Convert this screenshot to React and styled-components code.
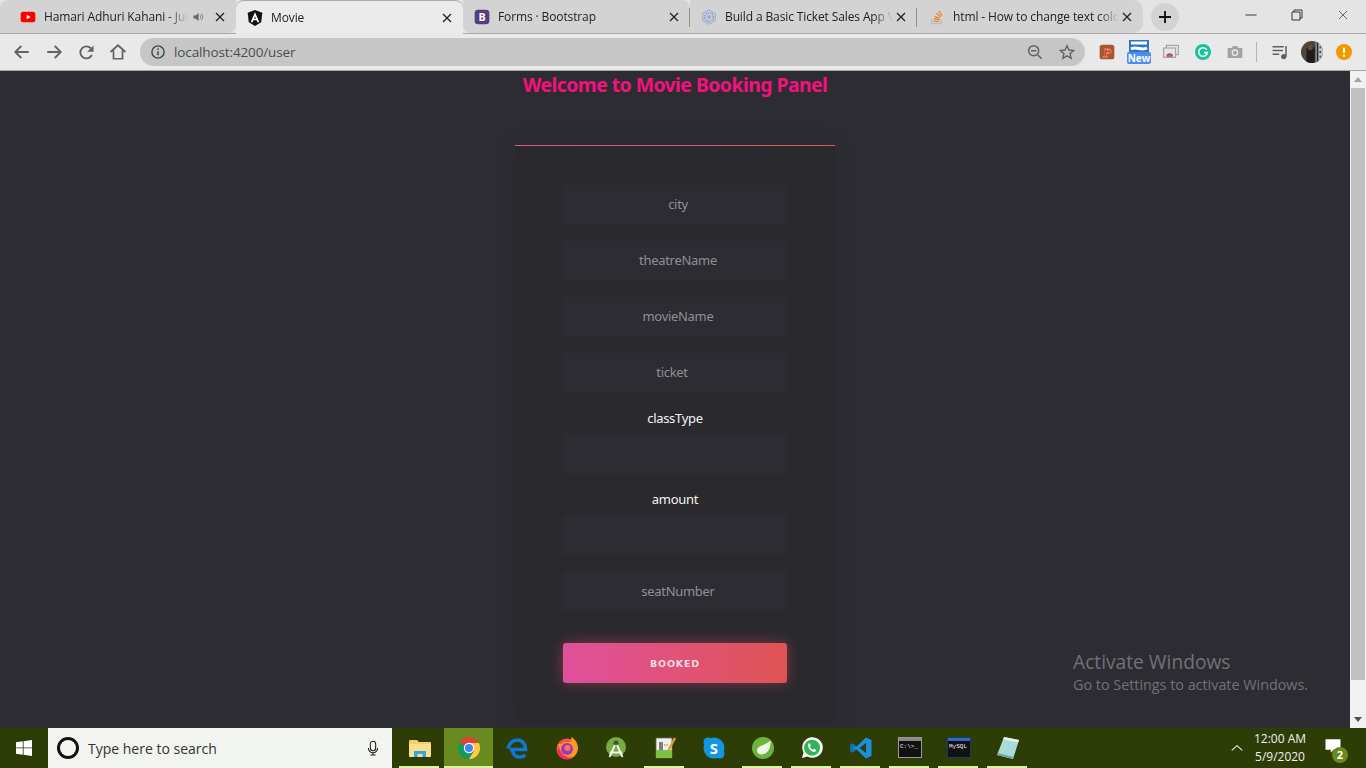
import React from "react";
import styled, { createGlobalStyle } from "styled-components";

const Global = createGlobalStyle`
  html, body { margin: 0; padding: 0; height: 100%; overflow: hidden; }
  #root { height: 100%; }
  * { box-sizing: border-box; }
`;
const Win = styled.div`display:flex;flex-direction:column;width:1366px;height:768px;overflow:hidden;position:relative;font-family:"Open Sans","Noto Sans",sans-serif;`;
const Strip = styled.div`display:flex;align-items:flex-start;height:34px;background:#e4e4e4;border-bottom:1px solid #a9a9a9;`;
const Tab = styled.div`
  display:flex;align-items:center;flex:none;height:${p=>p.$active?34:33}px;width:${p=>p.$w}px;
  padding-left:${p=>p.$pad}px;padding-right:9px;color:#222;font-size:12px;position:relative;
  background:${p=>p.$active?"#ebebeb":"#d3d3d3"};
  border-top:${p=>p.$active?"1px solid #a9a9a9":"none"};
  border-radius:${p=>p.$radius};
  ${p=>p.$sep?"&::after{content:'';position:absolute;right:0;top:8px;width:1px;height:19px;background:#8f8f8f;}":""}
`;
const TabIcon = styled.span`display:flex;width:16px;height:16px;flex:none;margin-right:8px;`;
const TabTitle = styled.span`flex:1;white-space:nowrap;overflow:hidden;min-width:0;letter-spacing:-.12px;
  -webkit-mask-image:linear-gradient(to right,#000 calc(100% - 24px),transparent calc(100% - 4px));mask-image:linear-gradient(to right,#000 calc(100% - 24px),transparent calc(100% - 4px));`;
const Speaker = styled.span`display:flex;flex:none;margin:0 9px 0 0;`;
const CloseBox = styled.span`display:flex;flex:none;width:14px;justify-content:center;margin-left:${p=>p.$tight?0:-3}px;`;
const NewTab = styled.div`width:28px;height:28px;margin:3px 0 0 8px;border-radius:50%;background:#d3d3d3;display:flex;align-items:center;justify-content:center;flex:none;`;
const WinCtl = styled.div`display:flex;margin-left:auto;`;
const WinBtn = styled.div`width:46px;height:29px;display:flex;align-items:center;justify-content:center;`;
const Toolbar = styled.div`display:flex;align-items:center;height:37px;background:#e9e9e9;border-bottom:1px solid #a6a6a6;padding-left:6px;`;
const NavBtn = styled.div`width:32px;height:32px;display:flex;align-items:center;justify-content:center;flex:none;`;
const Omni = styled.div`display:flex;align-items:center;flex:none;width:945px;height:28px;margin:0 6px 0 6px;border-radius:14px;background:#c6c6c6;padding:0 2px 0 11px;color:#4c4c4c;font-size:13.500px;`;
const OmniUrl = styled.span`margin-left:9px;flex:1;letter-spacing:-.12px;`;
const OmniBtn = styled.span`display:flex;width:32px;justify-content:center;`;
const Ext = styled.div`width:32px;height:32px;display:flex;align-items:center;justify-content:center;flex:none;`;
const ExtSep = styled.div`width:1px;height:20px;background:#b5b5b5;margin:0 7px 0 5px;flex:none;`;
const Main = styled.div`display:flex;flex:1;min-height:0;`;
const Page = styled.main`flex:1;background:#2d2c33;display:flex;flex-direction:column;align-items:center;`;
const Title = styled.h1`margin:0 0 46px;height:28px;font:700 19.400px/28px "Noto Sans","Open Sans",sans-serif;letter-spacing:-.54px;color:#f5117c;white-space:nowrap;`;
const Card = styled.form`width:320px;height:578px;padding:39px 48px 40px;background:#2a292e;display:flex;flex-direction:column;
  border-top:1px solid;border-image:linear-gradient(to right,#e0509a,#e05454) 1;box-shadow:0 0 24px rgba(0,0,0,.06);`;
const Field = styled.input`
  display:block;width:224px;height:40px;flex:none;margin-bottom:16px;border:0;outline:0;background:#2d2c32;text-align:center;
  padding:${p=>p.$left?"0 6px 2px 0":p.$low?"0 0 0 6px":"0 0 2px 6px"};font:13px "Noto Sans","Open Sans",sans-serif;letter-spacing:-.3px;color:#eee;
  &::placeholder{color:#908f96;opacity:1;}
`;
const FieldLabel = styled.label`display:block;height:25px;text-align:center;color:#f4f4f4;font:13px/18px "Noto Sans","Open Sans",sans-serif;letter-spacing:-.3px;`;
const Submit = styled.button`margin-top:16px;width:224px;height:40px;flex:none;border:0;border-radius:3px;background:linear-gradient(to right,#e0509c,#e05454);
  color:#eedde4;font:700 9.500px "DejaVu Sans",sans-serif;letter-spacing:.8px;box-shadow:0 0 14px rgba(224,80,100,.45);`;
const Scroll = styled.div`width:16px;background:#f1f1f1;display:flex;flex-direction:column;align-items:center;flex:none;position:relative;padding-top:17px;`;
const Thumb = styled.div`width:14px;height:592px;background:#c1c1c1;`;
const ArrowUp = styled.div`position:absolute;top:6px;left:4px;border:4px solid transparent;border-top:0;border-bottom:5px solid #a3a3a3;`;
const ArrowDown = styled.div`position:absolute;bottom:6px;left:4px;border:4px solid transparent;border-bottom:0;border-top:5px solid #505050;`;
const Watermark = styled.div`position:absolute;left:1073px;top:650px;color:#717176;pointer-events:none;`;
const WmBig = styled.div`font-size:19.200px;line-height:24px;`;
const WmSmall = styled.div`font-size:14.400px;line-height:22px;letter-spacing:-.02px;`;
const Taskbar = styled.footer`display:flex;align-items:stretch;height:40px;background:#2e3d06;flex:none;`;
const Start = styled.div`width:48px;display:flex;align-items:center;justify-content:center;flex:none;`;
const SearchBox = styled.div`display:flex;align-items:center;width:344px;flex:none;background:#f2f4ef;padding:0 11px 0 8px;color:#333;font-size:14px;`;
const SearchText = styled.span`flex:1;margin-left:8px;`;
const Slots = styled.div`display:flex;margin-left:3px;`;
const Slot = styled.div`width:49px;display:flex;align-items:center;justify-content:center;position:relative;flex:none;
  background:${p=>p.$on?"#688a1e":"transparent"};
  ${p=>p.$open?`&::after{content:'';position:absolute;bottom:0;left:${p.$on?0:4}px;width:${p.$on?49:40}px;height:2px;background:#d8f5a0;}`:""}`;
const Tray = styled.div`display:flex;align-items:center;margin-left:auto;color:#f2f2f2;`;
const Chev = styled.span`display:flex;margin-right:7px;`;
const Clock = styled.div`width:58px;text-align:center;font-size:12px;line-height:18px;`;
const Notif = styled.div`width:48px;height:40px;display:flex;align-items:center;justify-content:center;position:relative;padding-bottom:4px;`;
const Badge = styled.span`position:absolute;left:23px;top:19px;width:16px;height:16px;border-radius:50%;background:#688a1e;color:#fff;font-size:11px;font-weight:700;line-height:16px;text-align:center;`;
const Desk = styled.div`width:9px;border-right:1px solid #6d7a45;`;

const S = ({ s = 16, v = 24, children, ...r }) => <svg width={s} height={s} viewBox={`0 0 ${v} ${v}`} fill="none" {...r}>{children}</svg>;
const G = "#5f6368";

const YT = () => <S><rect x="1" y="4" width="22" height="16" rx="4" fill="#f00"/><path d="M10 8.500 16 12l-6 3.500z" fill="#fff"/></S>;
const Ng = () => <S><path d="M12 0 23 4 21.300 18.500 12 24 2.700 18.500 1 4z" fill="#111"/><path d="M12 3.500 5.500 18.500h2.800l1.300-3.200h4.800l1.300 3.200h2.800zM10.700 13 12 9.500l1.300 3.500z" fill="#fff"/></S>;
const Bs = () => <S><rect x="1" y="1" width="22" height="22" rx="5" fill="#563d7c"/><text x="12" y="18" fontSize="16" fontWeight="700" textAnchor="middle" fontFamily="Open Sans" fill="#fff">B</text></S>;
const Hex = () => <S><path d="M12 1 21.500 6.500v11L12 23 2.500 17.500v-11z" fill="#c5cddd" stroke="#8ea3cf" strokeWidth="1.200"/><circle cx="12" cy="12" r="6.500" fill="none" stroke="#8a93a8" strokeWidth="2" strokeDasharray="2 1.500"/><circle cx="12" cy="12" r="2.500" fill="#9ba3b5"/></S>;
const SO = () => <S><path d="M4 15v7h14v-7" stroke="#bcbbbb" strokeWidth="2"/><path d="M7 18.500h8M7.500 15l8 1M8.500 11l7.500 3M11 6.500l6.500 5M15 3l4.500 7" stroke="#f48024" strokeWidth="2"/></S>;
const Close = ({ c = "#222", s = 12, w = 2.600 }) => <S s={s}><path d="M4 4l16 16M20 4 4 20" stroke={c} strokeWidth={w}/></S>;

const Chrome = () => <S s={24}>
  <circle cx="12" cy="12" r="11" fill="#db4437"/>
  <path d="M12 12 2.400 6.500A11 11 0 0 0 12 23l5-7z" fill="#0f9d58"/>
  <path d="M12 7h9.900A11 11 0 0 1 12 23l5-8z" fill="#ffcd40"/>
  <circle cx="12" cy="12" r="5.200" fill="#fff"/><circle cx="12" cy="12" r="4" fill="#4285f4"/></S>;
const Explorer = () => <S s={24}><path d="M1 5a1 1 0 0 1 1-1h7l2 2h11a1 1 0 0 1 1 1v13H1z" fill="#f4cf66"/><path d="M1 8h22v12a1 1 0 0 1-1 1H2a1 1 0 0 1-1-1z" fill="#fce08e"/><path d="M6 21v-6h12v6h-3.500v-3h-5v3z" fill="#2fa9e0"/></S>;
const Edge = () => <S s={24}><path d="M4 13.500h15.500C19.500 7.500 16 4 11.500 4 6.500 4 3 8 2 12.500M6.500 13.500c0 4.500 3 7.500 7 7.500 2.500 0 4.500-.7 6-1.700" stroke="#0d78d6" strokeWidth="3.600"/></S>;
const Firefox = () => <S s={24}><circle cx="12" cy="13" r="10.500" fill="#f8553d"/><path d="M3 8c1 6 5 13 12 14 5-1 8-6 8-10 0-5-3-9-7-11 1 3 0 5-2 5-3 0-6 0-7 2z" fill="#ff9a1f"/><circle cx="12" cy="13" r="6" fill="#9a35d0"/><circle cx="12.500" cy="12" r="3" fill="#ff7a3a"/><path d="M4 12c2 7 7 10 13 9.500-4 3-13 2-14.500-6z" fill="#f5286f"/></S>;
const AS = () => <S s={24}><circle cx="12" cy="11" r="10" fill="#77ab43"/><circle cx="12" cy="7" r="2.600" fill="#3f5a22"/><path d="M11 9 5.500 21M13 9 18.500 21M6 16.500h12" stroke="#f2f2f2" strokeWidth="2"/></S>;
const Pad = () => <S s={24}><rect x="3" y="2" width="16" height="20" fill="#f0f0ea" stroke="#666" strokeWidth=".8"/><rect x="3" y="14" width="16" height="8" fill="#7dc143"/><path d="M7 6v8M9 6v8" stroke="#333" strokeWidth="1.200"/><path d="M11 9h5" stroke="#777" strokeDasharray="1.500 1"/><path d="M15 15 22 2" stroke="#e0a030" strokeWidth="2.400"/></S>;
const Skype = () => <S s={24}><circle cx="12" cy="12" r="10.500" fill="#1296e0"/><circle cx="6" cy="6" r="4.500" fill="#1296e0"/><circle cx="18" cy="18" r="4.500" fill="#1296e0"/><text x="12" y="17.500" textAnchor="middle" fontSize="15" fontWeight="700" fontFamily="Open Sans" fill="#fff">S</text></S>;
const Spring = () => <S s={24}><circle cx="12" cy="12" r="11" fill="#6cb33f"/><path d="M19.500 4.500C20 12 17 18.500 10.500 18.500 8 18.500 6 17 6 14.500 6 9.500 13 10 19.500 4.500z" fill="#f0f7e6"/></S>;
const WA = () => <S s={24}><path d="M2 22l1.500-5.500A10.300 10.300 0 1 1 7.500 20.500z" fill="#f7f7f7"/><circle cx="12" cy="11.700" r="8" fill="#2fb457"/><path d="M8.500 7.500c-1 1-1 3 1 5.500s4.500 3.500 6 2.500l.7-1.500-2.200-1.200-1 .9c-1.300-.5-2.500-1.800-3-3l.9-1-1-2.200z" fill="#fff"/></S>;
const VS = () => <S s={24}><path d="M17 1.500 22.500 4v16L17 22.500 7.500 13.500 3.500 16.500 1.500 15.500v-7l2-1 4 3z" fill="#1c8fdd"/><path d="M17 7 10.500 12l6.500 5z" fill="#2e3d06"/><path d="M1.500 15.500v-7l2-1L7.500 10.500 3.500 12l4 1.500-4 3z" fill="#0e6fb5"/></S>;
const Term = ({ label, bar }) => <S s={24}><rect x=".5" y="1.500" width="23" height="20" fill="#111" stroke={bar ? "#1c3a66" : "#999"}/><rect x="1" y="2" width="22" height="3" fill={bar ? "#2d6cc4" : "#888"}/><text x="2" y="12" fontSize="6" fontFamily="Liberation Mono" fill="#eee">{label}</text></S>;
const Notes = () => <S s={24}><path d="M8 1 23 4 17 23 1 19z" fill="#a9dcd8"/><path d="M8 1 23 4l-.8 2.500L7.200 3.500z" fill="#e4f2f0"/><path d="M1 19l16 4 .6-2L2 17z" fill="#6fa9a6"/></S>;

const NameP = () => <S s={16}><rect x="1" y="1" width="22" height="22" rx="4" fill="#a5572e"/><text x="12" y="19" textAnchor="middle" fontSize="20" fontWeight="700" fontFamily="Liberation Serif" fontStyle="italic" fill="#f51c1c" stroke="#f7d9c8" strokeWidth=".5">P</text></S>;
const NewExt = () => <svg width="24" height="24" viewBox="0 0 24 24"><rect x="2" y="0" width="20" height="12" fill="#2e73c9"/><path d="M4 3h16M4 9c6-3 10 2 16-1" stroke="#fff" strokeWidth="3" fill="none"/><rect x="0" y="12" width="24" height="12" rx="2" fill="#4a8ef0"/><text x="12" y="22" textAnchor="middle" fontSize="10" fontWeight="700" fontFamily="Open Sans" fill="#fff">New</text></svg>;
const Cast = () => <S s={16}><rect x="5" y="2" width="18" height="14" fill="none" stroke="#999" strokeWidth="1.500"/><rect x="1" y="6" width="18" height="14" fill="#e4e4e4" stroke="#999" strokeWidth="1.500"/><path d="M5 19a5 5 0 0 1 10 0z" fill="#db4437"/><circle cx="10" cy="18" r="2" fill="#4285f4"/></S>;
const Gram = () => <S s={16}><circle cx="12" cy="12" r="12" fill="#15c39a"/><path d="M17.500 8.500A6.500 6.500 0 1 0 18.500 13H13.500" stroke="#fff" strokeWidth="2.400"/></S>;
const Cam = () => <S s={16}><path d="M1 6h6l2-3h6l2 3h6v15H1z" fill="#a3a3a3"/><circle cx="12" cy="13" r="5" fill="#e9e9e9"/><circle cx="12" cy="13" r="3" fill="#a3a3a3"/></S>;
const Queue = () => <S s={18}><path d="M2 5h15M2 10h14M2 15h9" stroke="#5f5f5f" strokeWidth="2"/><path d="M20 4v14" stroke="#5f5f5f" strokeWidth="2"/><circle cx="17" cy="18" r="3.500" fill="#5f5f5f"/></S>;
const Avatar = () => <svg width="22" height="22" viewBox="0 0 24 24"><defs><clipPath id="av"><circle cx="12" cy="12" r="12"/></clipPath></defs><g clipPath="url(#av)"><rect width="24" height="24" fill="#4c4540"/><path d="M6 24V9c0-6 8-6 9 0v15z" fill="#1f1b1b"/><circle cx="10" cy="7" r="3" fill="#6b4a3e"/><rect x="16" y="0" width="8" height="24" fill="#b7c4cc"/><path d="M18 0v24" stroke="#2a2a2a" strokeWidth="2"/><path d="M21 1v2M21 6v2M21 11v2M21 16v2" stroke="#333" strokeWidth="1.500"/></g></svg>;
const Alert = () => <S s={16}><circle cx="12" cy="12" r="12" fill="#f29900"/><path d="M12 5.500v8" stroke="#fff" strokeWidth="3"/><circle cx="12" cy="17.500" r="1.800" fill="#fff"/></S>;

const tabs = [
  { w: 236, pad: 20, icon: <YT/>, t: "Hamari Adhuri Kahani - Jul", radius: "8px 0 8px 0", audio: true },
  { w: 227, pad: 11, icon: <Ng/>, t: "Movie", active: true, radius: "8px 8px 0 0" },
  { w: 227, pad: 11, icon: <Bs/>, t: "Forms · Bootstrap", radius: "0 8px 0 8px", sep: true },
  { w: 227, pad: 11, icon: <Hex/>, t: "Build a Basic Ticket Sales App V", radius: "0", sep: true },
  { w: 226, pad: 12, icon: <SO/>, t: "html - How to change text colo", radius: "0 10px 10px 0" },
];
const taskIcons = [
  { i: <Explorer/>, open: true }, { i: <Chrome/>, open: true, on: true }, { i: <Edge/> }, { i: <Firefox/> }, { i: <AS/> },
  { i: <Pad/>, open: true }, { i: <Skype/> }, { i: <Spring/>, open: true }, { i: <WA/>, open: true }, { i: <VS/>, open: true },
  { i: <Term label="C:\>_"/>, open: true }, { i: <Term label="MySQL" bar/>, open: true }, { i: <Notes/>, open: true },
];

export default function App() {
  return <Win>
    <Global/>
    <Strip>
      {tabs.map(t => <Tab key={t.t} $w={t.w} $pad={t.pad} $active={t.active} $radius={t.radius} $sep={t.sep}>
        <TabIcon>{t.icon}</TabIcon>
        <TabTitle>{t.t}</TabTitle>
        {t.audio && <Speaker><S s={12}><path d="M3 9v6h4l6 5V4L7 9z" fill="#666"/><path d="M16 8c2 2 2 6 0 8M19 5c3.500 4 3.500 10 0 14" stroke="#888" strokeWidth="2"/></S></Speaker>}
        <CloseBox $tight={t.audio}><Close/></CloseBox>
      </Tab>)}
      <NewTab><S s={16}><path d="M12 3v18M3 12h18" stroke="#111" strokeWidth="2.800"/></S></NewTab>
      <WinCtl>
        <WinBtn><S s={12}><path d="M1 12h22" stroke="#222" strokeWidth="1.800"/></S></WinBtn>
        <WinBtn><S s={12}><path d="M6 6V2h16v16h-4M2 6h16v16H2z" stroke="#222" strokeWidth="1.800"/></S></WinBtn>
        <WinBtn><Close s={12} w={1.400} c="#333"/></WinBtn>
      </WinCtl>
    </Strip>
    <Toolbar>
      <NavBtn><S s={18}><path d="M21 12H4M11 4l-8 8 8 8" stroke={G} strokeWidth="2.400"/></S></NavBtn>
      <NavBtn><S s={18}><path d="M3 12h17M13 4l8 8-8 8" stroke={G} strokeWidth="2.400"/></S></NavBtn>
      <NavBtn><S s={17}><path d="M19.500 15.500A8.500 8.500 0 1 1 18 6" stroke={G} strokeWidth="2.600"/><path d="M22 2v9h-9z" fill={G}/></S></NavBtn>
      <NavBtn><S s={18}><path d="M2 12 12 3l10 9M6 10v11h12V10" stroke={G} strokeWidth="2.300"/></S></NavBtn>
      <Omni>
        <S s={14}><circle cx="12" cy="12" r="10.500" stroke="#444" strokeWidth="2.400"/><path d="M12 10.500v7" stroke="#444" strokeWidth="2.600"/><circle cx="12" cy="7" r="1.500" fill="#444"/></S>
        <OmniUrl>localhost:4200/user</OmniUrl>
        <OmniBtn><S s={16}><circle cx="10" cy="10" r="7.500" stroke={G} strokeWidth="2.200"/><path d="M6 10h8M16 16l6 6" stroke={G} strokeWidth="2.200"/></S></OmniBtn>
        <OmniBtn><S s={16}><path d="M12 2.500 14.900 9l7.100.7-5.400 4.700 1.600 7L12 17.700l-6.200 3.700 1.600-7L2 9.700 9.100 9z" stroke={G} strokeWidth="2.100"/></S></OmniBtn>
      </Omni>
      <Ext><NameP/></Ext><Ext><NewExt/></Ext><Ext><Cast/></Ext><Ext><Gram/></Ext><Ext><Cam/></Ext>
      <ExtSep/>
      <Ext><Queue/></Ext>
      <Ext><Avatar/></Ext>
      <Ext><Alert/></Ext>
    </Toolbar>
    <Main>
      <Page>
        <Title>Welcome to Movie Booking Panel</Title>
        <Card onSubmit={e => e.preventDefault()}>
          <Field placeholder="city"/>
          <Field placeholder="theatreName"/>
          <Field placeholder="movieName"/>
          <Field placeholder="ticket" $left/>
          <FieldLabel>classType</FieldLabel>
          <Field aria-label="classType"/>
          <FieldLabel>amount</FieldLabel>
          <Field aria-label="amount"/>
          <Field placeholder="seatNumber" $low/>
          <Submit>BOOKED</Submit>
        </Card>
      </Page>
      <Scroll><ArrowUp/><Thumb/><ArrowDown/></Scroll>
    </Main>
    <Taskbar>
      <Start><svg width="16" height="16" viewBox="0 0 16 16"><path d="M0 2.300 6.800 1.300V7.500H0zM7.600 1.200 16 0V7.500H7.600zM0 8.300H6.800V14.700L0 13.700zM7.600 8.300H16V16L7.600 14.800z" fill="#fff"/></svg></Start>
      <SearchBox>
        <S s={24}><circle cx="12" cy="12" r="9.500" stroke="#111" strokeWidth="3"/></S>
        <SearchText>Type here to search</SearchText>
        <S s={16}><rect x="8" y="2" width="8" height="14" rx="4" stroke="#222" strokeWidth="1.600"/><path d="M5 12a7 7 0 0 0 14 0M12 19v3M8 22.500h8" stroke="#222" strokeWidth="1.600"/></S>
      </SearchBox>
      <Slots>{taskIcons.map((x, i) => <Slot key={i} $open={x.open} $on={x.on}>{x.i}</Slot>)}</Slots>
      <Tray>
        <Chev><S s={14}><path d="M3 16 12 8l9 8" stroke="#f2f2f2" strokeWidth="1.800"/></S></Chev>
        <Clock>12:00 AM<br/>5/9/2020</Clock>
        <Notif><S s={18}><path d="M2 3h20v14h-9l-4 4v-4H2z" fill="#fff"/></S><Badge>2</Badge></Notif>
        <Desk/>
      </Tray>
    </Taskbar>
    <Watermark><WmBig>Activate Windows</WmBig><WmSmall>Go to Settings to activate Windows.</WmSmall></Watermark>
  </Win>;
}
